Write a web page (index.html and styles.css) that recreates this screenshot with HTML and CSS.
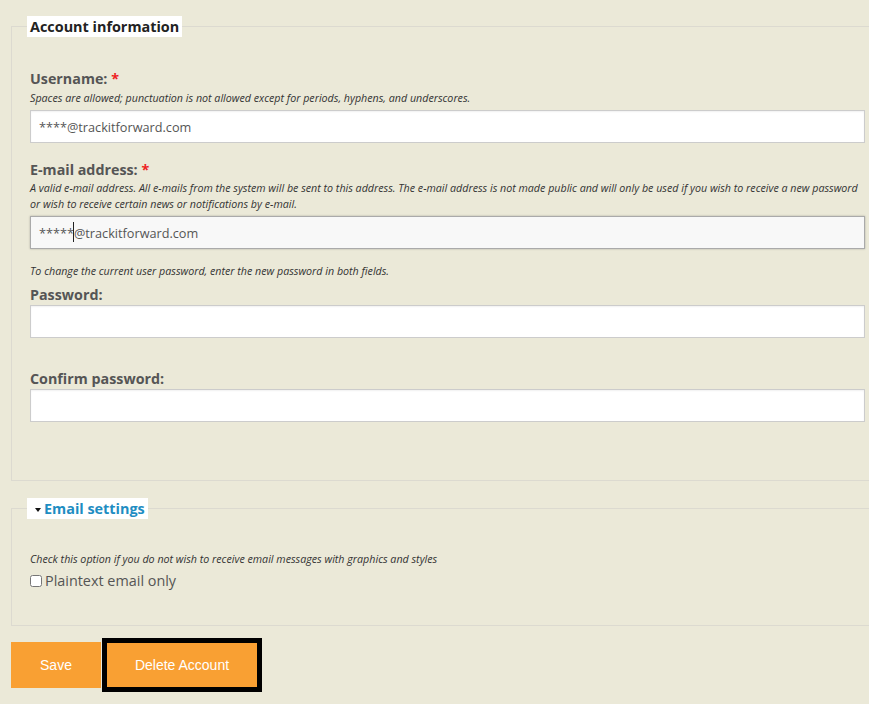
FILE: index.html
```html
<!DOCTYPE html>
<html>
<head>
<meta charset="utf-8">
<link rel="stylesheet" href="styles.css">
</head>
<body>
<form class="page">
  <fieldset class="group account">
    <legend class="group-title">Account information</legend>
    <div class="item">
      <label class="label">Username: <span class="req">*</span></label>
      <div class="desc">Spaces are allowed; punctuation is not allowed except for periods, hyphens, and underscores.</div>
      <input class="text" type="text" value="****@trackitforward.com">
    </div>
    <div class="item item-email">
      <label class="label">E-mail address: <span class="req">*</span></label>
      <div class="desc">A valid e-mail address. All e-mails from the system will be sent to this address. The e-mail address is not made public and will only be used if you wish to receive a new password or wish to receive certain news or notifications by e-mail.</div>
      <div class="field-wrap">
        <input class="text focused" type="text" value="*****@trackitforward.com">
        <span class="caret"></span>
      </div>
    </div>
    <div class="desc pw-note">To change the current user password, enter the new password in both fields.</div>
    <div class="item item-pass">
      <label class="label">Password:</label>
      <input class="text" type="password">
    </div>
    <div class="item item-confirm">
      <label class="label">Confirm password:</label>
      <input class="text" type="password">
    </div>
  </fieldset>

  <fieldset class="group email">
    <legend class="group-title link"><span class="tri"></span>Email settings</legend>
    <div class="desc check-note">Check this option if you do not wish to receive email messages with graphics and styles</div>
    <label class="check"><input type="checkbox"> Plaintext email only</label>
  </fieldset>

  <div class="actions">
    <button type="button" class="btn save">Save</button>
    <button type="button" class="btn delete">Delete Account</button>
  </div>
</form>
</body>
</html>
```

FILE: styles.css
```css
html, body {
  margin: 0;
  padding: 0;
  background: #ebe9d8;
  overflow: hidden;
}
body {
  font-family: "Open Sans", "Liberation Sans", sans-serif;
  color: #555;
}
.page {
  padding: 16px 0 0 11px;
  width: 880px;
}
.group {
  margin: 0;
  border: 1px solid #dcdad0;
  border-right: none;
  padding: 0 0 0 18px;
}
.group-title {
  background: #fff;
  font-weight: bold;
  font-size: 14.4px;
  line-height: 21px;
  color: #222;
  padding: 0 3px;
  margin-left: -3px;
}
.group-title.link {
  color: #1e8dc2;
  padding-left: 8px;
  display: flex;
  align-items: center;
}
.tri {
  width: 0;
  height: 0;
  border-left: 3px solid transparent;
  border-right: 3px solid transparent;
  border-top: 4px solid #111;
  margin-right: 3px;
  margin-top: 2px;
}
.account {
  padding-top: 33px;
  padding-bottom: 58px;
}
.item {
  display: flex;
  flex-direction: column;
  width: 835px;
}
.label {
  font-size: 14.3px;
  font-weight: bold;
  line-height: 18px;
  color: #555;
  margin-bottom: 2px;
}
.req {
  color: #e22;
}
.desc {
  font-size: 10.7px;
  font-style: italic;
  line-height: 16px;
  color: #333;
}
.item .desc {
  margin-bottom: 4px;
}
.text {
  box-sizing: border-box;
  width: 835px;
  height: 33px;
  margin: 0;
  border: 1px solid #ccc;
  background: #fff;
  box-shadow: inset 0 1px 2px rgba(0,0,0,0.06);
  padding: 0 8px;
  font-family: "Open Sans", sans-serif;
  font-size: 12.7px;
  color: #555;
  outline: none;
}
.text.focused {
  background: #f8f8f8;
  border-color: #aaa;
  box-shadow: 0 0 2px rgba(0,0,0,0.25);
}
.field-wrap {
  position: relative;
}
.caret {
  position: absolute;
  left: 43px;
  top: 6px;
  width: 1px;
  height: 20px;
  background: #222;
}
.item-email {
  margin-top: 18px;
}
.item-email .label {
  margin-bottom: 1px;
}
.item-email .desc {
  margin-bottom: 4px;
}
.pw-note {
  margin-top: 14px;
}
.item-pass {
  margin-top: 7px;
}
.item-pass .label,
.item-confirm .label {
  margin-bottom: 1px;
}
.item-confirm {
  margin-top: 32px;
}
.email {
  margin-top: 17px;
  padding-top: 32px;
  padding-bottom: 34px;
}
.check-note {
  line-height: 16px;
}
.check {
  display: flex;
  align-items: center;
  font-size: 14.4px;
  color: #555;
  line-height: 20px;
  margin-top: 4px;
}
.check input {
  margin: 0 3px 0 0;
  width: 12px;
  height: 12px;
}
.actions {
  display: flex;
  align-items: center;
  margin-top: 12px;
  gap: 1px;
}
.btn {
  font-family: "Liberation Sans", Arial, sans-serif;
  font-size: 14px;
  color: #fff;
  background: #f9a033;
  border: none;
  margin: 0;
  cursor: pointer;
}
.save {
  width: 90px;
  height: 46px;
}
.delete {
  box-sizing: border-box;
  width: 160px;
  height: 54px;
  border: 5px solid #000;
}
```
